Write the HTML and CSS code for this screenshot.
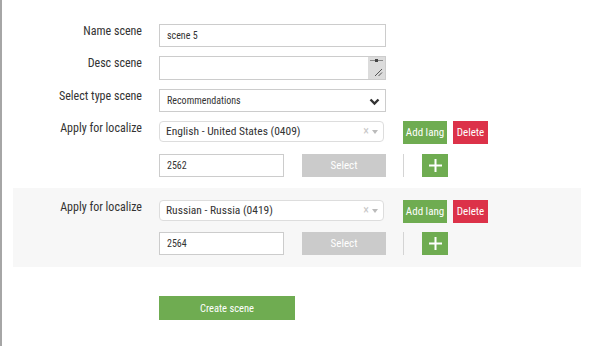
FILE: index.html
```html
<!DOCTYPE html>
<html>
<head>
<meta charset="utf-8">
<link rel="stylesheet" href="styles.css">
</head>
<body>
<div class="page">
  <div class="form">
    <div class="row">
      <label class="lbl">Name scene</label>
      <div class="ctrl"><div class="input wide">scene 5</div></div>
    </div>
    <div class="row">
      <label class="lbl">Desc scene</label>
      <div class="ctrl">
        <div class="input wide textarea">
          <div class="grip">
            <span class="grip-top"></span>
            <svg class="grip-diag" width="9" height="9" viewBox="0 0 9 9"><path d="M1 8 L8 1 M4.5 8 L8 4.5" stroke="#555" stroke-width="1" fill="none"/></svg>
          </div>
        </div>
      </div>
    </div>
    <div class="row">
      <label class="lbl">Select type scene</label>
      <div class="ctrl">
        <div class="input wide select">Recommendations
          <svg class="chev" width="11" height="8" viewBox="0 0 11 8"><path d="M1.5 1.5 L5.5 5.5 L9.5 1.5" stroke="#333" stroke-width="2.4" fill="none"/></svg>
        </div>
      </div>
    </div>
    <div class="loc">
      <div class="row r4">
        <label class="lbl">Apply for localize</label>
        <div class="ctrl">
          <div class="s2">English - United States (0409)<span class="s2x">×</span><span class="s2a"></span></div>
          <button class="btn green addlang">Add lang</button>
          <button class="btn red">Delete</button>
        </div>
      </div>
      <div class="row r5">
        <span class="lbl"></span>
        <div class="ctrl">
          <div class="input num">2562</div>
          <button class="btn gray sel">Select</button>
          <span class="divider"></span>
          <button class="btn green plus"><svg width="13" height="13" viewBox="0 0 13 13"><path d="M6.5 0 V13 M0 6.5 H13" stroke="#fff" stroke-width="2" fill="none"/></svg></button>
        </div>
      </div>
    </div>
    <div class="loc shaded">
      <div class="row r4">
        <label class="lbl">Apply for localize</label>
        <div class="ctrl">
          <div class="s2">Russian - Russia (0419)<span class="s2x">×</span><span class="s2a"></span></div>
          <button class="btn green addlang">Add lang</button>
          <button class="btn red">Delete</button>
        </div>
      </div>
      <div class="row r5">
        <span class="lbl"></span>
        <div class="ctrl">
          <div class="input num">2564</div>
          <button class="btn gray sel">Select</button>
          <span class="divider"></span>
          <button class="btn green plus"><svg width="13" height="13" viewBox="0 0 13 13"><path d="M6.5 0 V13 M0 6.5 H13" stroke="#fff" stroke-width="2" fill="none"/></svg></button>
        </div>
      </div>
    </div>
    <div class="row submit">
      <span class="lbl"></span>
      <div class="ctrl"><button class="btn green create">Create scene</button></div>
    </div>
  </div>
</div>
</body>
</html>
```
FILE: styles.css
```css
html, body {
  margin: 0;
  padding: 0;
  background: #fff;
}
body {
  font-family: "Roboto Condensed", "Roboto", sans-serif;
  color: #333;
  height: 346px;
  border-left: 2px solid #a6a6a6;
  box-sizing: border-box;
}
.page {
  padding: 24px 0 0 11px;
  width: 568px;
}
.row {
  display: grid;
  grid-template-columns: 129px 1fr;
  column-gap: 17px;
  margin-bottom: 9px;
}
.lbl {
  text-align: right;
  font-size: 12px;
  line-height: 14px;
  color: #333;
  white-space: nowrap;
}
.ctrl {
  display: flex;
  align-items: flex-start;
}
.input {
  box-sizing: border-box;
  height: 23px;
  border: 1px solid #ccc;
  background: #fff;
  font-size: 10px;
  line-height: 21px;
  padding-left: 7px;
  color: #333;
  position: relative;
}
.wide { width: 227px; }
.textarea { height: 24px; }
.grip {
  position: absolute;
  right: 0;
  top: 0;
  bottom: 0;
  width: 17px;
  background: #dcdcdc;
}
.grip-top {
  position: absolute;
  left: 2px;
  right: 2px;
  top: 3px;
  height: 1px;
  background: #888;
}
.grip-top::after {
  content: "";
  position: absolute;
  left: 5px;
  top: -1px;
  width: 3px;
  height: 3px;
  background: #444;
}
.grip-diag {
  position: absolute;
  right: 2px;
  bottom: 2px;
}
.chev {
  position: absolute;
  right: 5px;
  top: 8px;
}
.s2 {
  box-sizing: border-box;
  width: 225px;
  height: 21px;
  border: 1px solid #ddd;
  border-radius: 4px;
  background: #fff;
  font-size: 11.5px;
  line-height: 19px;
  padding-left: 6px;
  color: #333;
  position: relative;
  white-space: nowrap;
}
.s2x {
  position: absolute;
  right: 14px;
  top: 0;
  color: #c8c8c8;
  font-size: 12px;
  line-height: 19px;
}
.s2a {
  position: absolute;
  right: 5px;
  top: 8px;
  border-left: 3px solid transparent;
  border-right: 3px solid transparent;
  border-top: 4px solid #bbb;
}
.btn {
  box-sizing: border-box;
  border: 0;
  margin: 0;
  padding: 0;
  height: 23px;
  font-family: inherit;
  font-size: 11px;
  color: #fff;
  white-space: nowrap;
  display: flex;
  align-items: center;
  justify-content: center;
}
.green { background: #6fac51; }
.red { background: #dc3249; width: 35px; margin-left: 6px; }
.gray { background: #cbcbcb; }
.addlang { width: 44px; margin-left: 19px; }
.num { width: 125px; }
.sel { width: 84px; margin-left: 18px; font-size: 11px; }
.divider {
  width: 1px;
  height: 23px;
  background: #d4d4d4;
  margin-left: 17px;
}
.plus {
  width: 26px;
  margin-left: 18px;
}
.r4 { margin-bottom: 10px; }
.loc > .r5 { margin-bottom: 11px; }
.shaded {
  background: #f7f7f7;
  padding: 12px 0;
  margin-bottom: 29px;
}
.shaded > .r4 { margin-bottom: 9px; }
.shaded > .r5 { margin-bottom: 0; }
.create {
  width: 136px;
  height: 24px;
  font-size: 10.5px;
}
```
